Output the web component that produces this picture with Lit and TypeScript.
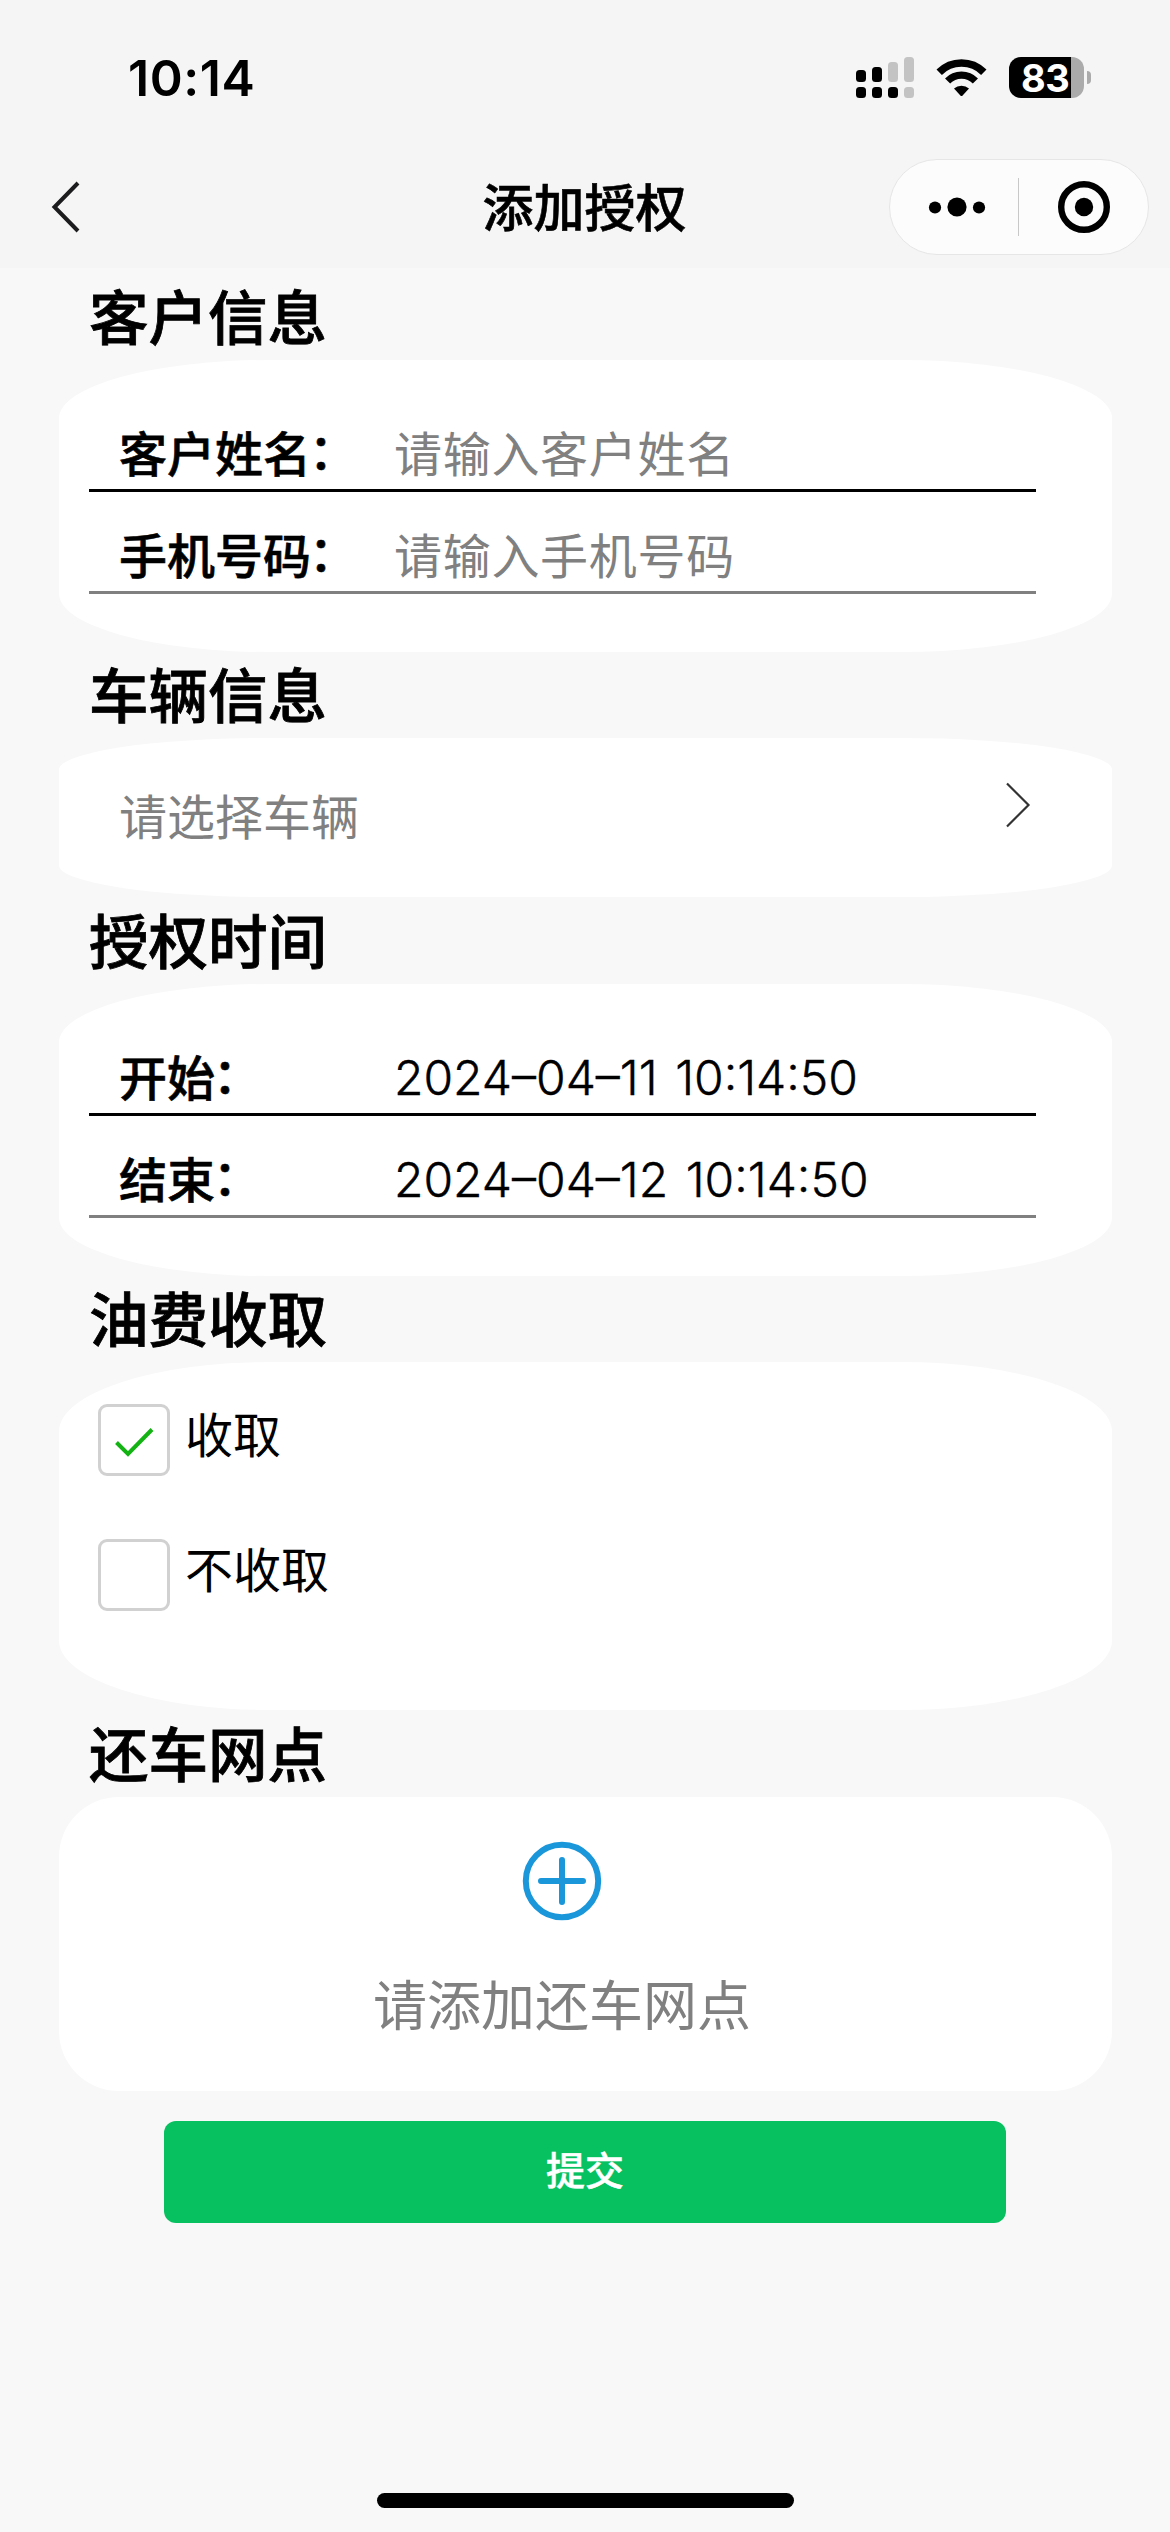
import { LitElement, html, css, svg } from "lit";
import { customElement, property } from "lit/decorators.js";

const SIGNAL_BARS = [
  { x: 0, top: 13, topOn: true, bottomOn: true },
  { x: 16, top: 10, topOn: true, bottomOn: true },
  { x: 32, top: 5, topOn: false, bottomOn: true },
  { x: 48, top: 0, topOn: false, bottomOn: false },
];

@customElement("status-bar")
class StatusBar extends LitElement {
  static styles = css`
    :host {
      display: flex;
      align-items: center;
      height: 155px;
      padding: 0 79px 0 128px;
      box-sizing: border-box;
      font-family: Inter, "Liberation Sans", sans-serif;
      color: #000;
    }
    .time {
      flex: 1;
      font-size: 50px;
      font-weight: 600;
      line-height: 60px;
      letter-spacing: 0.6px;
    }
    .signal {
      width: 58px;
      height: 41px;
    }
    .wifi {
      width: 51px;
      height: 38px;
      margin-left: 22px;
    }
    .battery {
      display: flex;
      align-items: center;
      margin-left: 22px;
      gap: 3px;
    }
    .level {
      width: 75px;
      height: 41px;
      box-sizing: border-box;
      padding-left: 12px;
      border-radius: 12px;
      background: linear-gradient(90deg, #000 62px, #ababab 62px);
      color: #fff;
      font-size: 38px;
      font-weight: 650;
      line-height: 42px;
      letter-spacing: -0.5px;
    }
    .nub {
      width: 4px;
      height: 13px;
      border-radius: 0 5px 5px 0;
      background: #ababab;
    }
  `;

  render() {
    return html`
      <span class="time">10:14</span>
      <svg class="signal" viewBox="0 0 58 41">
        ${SIGNAL_BARS.map(
          (b) => svg`
            <rect x=${b.x} y=${b.top} width="10" height=${25 - b.top} rx="3.5" fill=${b.topOn ? "#000" : "#c3c3c3"}></rect>
            <rect x=${b.x} y="30" width="10" height="11" rx="3.5" fill=${b.bottomOn ? "#000" : "#c3c3c3"}></rect>`
        )}
      </svg>
      <svg class="wifi" viewBox="0 0 51 38">
        <path d="M3.2 13.2 A31.5 31.5 0 0 1 47.8 13.2" fill="none" stroke="#000" stroke-width="7.6"></path>
        <path d="M11.6 22 A19.5 19.5 0 0 1 39.4 22" fill="none" stroke="#000" stroke-width="7.2"></path>
        <path d="M18 29.6 A11 11 0 0 1 33 29.6 L26.6 36.4 Q25.5 37.4 24.4 36.4 Z"></path>
      </svg>
      <div class="battery">
        <div class="level">83</div>
        <div class="nub"></div>
      </div>
    `;
  }
}

@customElement("nav-header")
class NavHeader extends LitElement {
  @property() heading = "";

  static styles = css`
    :host {
      display: grid;
      grid-template-columns: 1fr auto 1fr;
      align-items: center;
      height: 104px;
      padding: 0 21px 0 51px;
      box-sizing: border-box;
      font-family: "Noto Sans CJK SC", sans-serif;
    }
    .back {
      width: 30px;
      height: 52px;
    }
    .title {
      font-size: 51px;
      font-weight: 500;
      line-height: 70px;
      margin: 0 0 4px -31px;
      color: #000;
      -webkit-text-stroke: 0.6px #000;
    }
    .capsule {
      justify-self: end;
      display: flex;
      align-items: center;
      width: 260px;
      height: 96px;
      box-sizing: border-box;
      border: 1px solid #e6e6e6;
      border-radius: 48px;
      background: #fcfcfc;
    }
    .capsule svg {
      width: 258px;
      height: 94px;
    }
  `;

  render() {
    return html`
      <svg class="back" viewBox="0 0 30 52">
        <path d="M27 2 L3.5 26 L27 50" fill="none" stroke="#1c1c1e" stroke-width="4"></path>
      </svg>
      <div class="title">${this.heading}</div>
      <div class="capsule">
        <svg viewBox="0 0 258 94">
          <circle cx="45" cy="47.5" r="6.1"></circle>
          <circle cx="67" cy="47" r="9.6"></circle>
          <circle cx="89" cy="47.5" r="6.1"></circle>
          <rect x="128" y="18" width="1" height="58" fill="#c8c8c8"></rect>
          <circle cx="194" cy="47" r="22.8" fill="none" stroke="#000" stroke-width="6.4"></circle>
          <circle cx="194" cy="47" r="9.2"></circle>
        </svg>
      </div>
    `;
  }
}

@customElement("form-row")
class FormRow extends LitElement {
  @property() label = "";
  @property() value = "";
  @property() placeholder = "";

  static styles = css`
    :host {
      display: flex;
      align-items: center;
      width: 947px;
      height: 102px;
      box-sizing: border-box;
      padding: 23px 0 0 30px;
      border-bottom: 3px solid #808080;
      font-family: "Noto Sans CJK SC", sans-serif;
      font-size: 48px;
      line-height: 68px;
      color: #000;
    }
    :host([strong]) {
      border-bottom-color: #000;
    }
    .label {
      display: flex;
      width: 275px;
      font-weight: 500;
      white-space: nowrap;
      -webkit-text-stroke: 0.6px #000;
    }
    .colon {
      margin: -3px 0 3px -2px;
    }
    .placeholder {
      color: #808080;
      letter-spacing: 0.7px;
    }
    .value {
      font-family: Inter, "Liberation Sans", sans-serif;
      font-weight: 350;
      letter-spacing: 0;
      word-spacing: 4px;
      padding-top: 6px;
      -webkit-text-stroke: 0.4px #000;
    }
  `;

  render() {
    return html`
      <span class="label"><span>${this.label}</span><span class="colon">：</span></span>
      ${this.value
        ? html`<span class="value">${this.value}</span>`
        : html`<span class="placeholder">${this.placeholder}</span>`}
    `;
  }
}

@customElement("check-option")
class CheckOption extends LitElement {
  @property() label = "";
  @property({ type: Boolean }) checked = false;

  static styles = css`
    :host {
      display: flex;
      gap: 15px;
      height: 72px;
      font-family: "Noto Sans CJK SC", sans-serif;
      color: #000;
    }
    .box {
      width: 72px;
      height: 72px;
      box-sizing: border-box;
      border: 3px solid #d1d1d1;
      border-radius: 9px;
      background: #fff;
    }
    .box svg {
      display: block;
      width: 66px;
      height: 66px;
    }
    .text {
      font-size: 48px;
      line-height: 56px;
    }
  `;

  render() {
    return html`
      <div class="box">
        ${this.checked
          ? html`<svg viewBox="0 0 66 66">
              <path d="M15.5 35.5 L27 47 L51 22.5" fill="none" stroke="#12b312" stroke-width="4"></path>
            </svg>`
          : null}
      </div>
      <span class="text">${this.label}</span>
    `;
  }
}

@customElement("app-root")
class AppRoot extends LitElement {
  static styles = css`
    :host {
      display: flex;
      flex-direction: column;
      width: 1170px;
      height: 2532px;
      overflow: hidden;
      background: #f8f8f8;
      font-family: "Noto Sans CJK SC", sans-serif;
      color: #000;
    }
    .top {
      height: 268px;
      flex: none;
      background: #f5f5f5;
    }
    .content {
      flex: 1;
      display: flex;
      flex-direction: column;
      padding-top: 6px;
    }
    h2 {
      height: 86px;
      margin: 0;
      padding-left: 89px;
      font-size: 59.5px;
      font-weight: 500;
      line-height: 81px;
      -webkit-text-stroke: 0.8px #000;
    }
    .card {
      width: 1053px;
      margin-left: 59px;
      box-sizing: border-box;
      padding-left: 30px;
      background: #fff;
      border-radius: 20%;
    }
    .rows {
      height: 292px;
      padding-top: 30px;
    }
    .vehicle {
      display: flex;
      justify-content: space-between;
      height: 159px;
      margin-bottom: 1px;
      padding: 42px 81px 0 60px;
      color: #808080;
      font-size: 48px;
      line-height: 68px;
    }
    .vehicle svg {
      width: 26px;
      height: 48px;
      margin-top: 1px;
    }
    .fuel {
      display: flex;
      flex-direction: column;
      gap: 63px;
      height: 348px;
      margin-bottom: 1px;
      padding: 42px 0 0 39px;
    }
    .station {
      display: flex;
      flex-direction: column;
      align-items: center;
      height: 294px;
      padding: 44px 47px 0 0;
      border-radius: 60px;
      color: #808080;
      font-size: 54px;
    }
    .station svg {
      width: 80px;
      height: 80px;
    }
    .station span {
      margin-top: 43px;
      line-height: 78px;
    }
    .submit {
      width: 842px;
      height: 102px;
      margin: 30px 0 0 164px;
      padding: 0 0 7px;
      border: 0;
      border-radius: 12px;
      background: #07c160;
      color: #fff;
      font-family: inherit;
      font-size: 39px;
      font-weight: 500;
      line-height: 95px;
      -webkit-text-stroke: 0.5px #fff;
    }
    .home {
      width: 417px;
      height: 15px;
      margin: auto auto 24px 377px;
      border-radius: 8px;
      background: #000;
    }
  `;

  render() {
    return html`
      <div class="top">
        <status-bar></status-bar>
        <nav-header heading="添加授权"></nav-header>
      </div>
      <div class="content">
        <h2>客户信息</h2>
        <div class="card rows">
          <form-row strong label="客户姓名" placeholder="请输入客户姓名"></form-row>
          <form-row label="手机号码" placeholder="请输入手机号码"></form-row>
        </div>
        <h2>车辆信息</h2>
        <div class="card vehicle">
          <span>请选择车辆</span>
          <svg viewBox="0 0 26 48">
            <path d="M2 2.5 L23.5 24 L2 45.5" fill="none" stroke="#333" stroke-width="2.2"></path>
          </svg>
        </div>
        <h2>授权时间</h2>
        <div class="card rows">
          <form-row strong label="开始" value="2024–04–11 10:14:50"></form-row>
          <form-row label="结束" value="2024–04–12 10:14:50"></form-row>
        </div>
        <h2>油费收取</h2>
        <div class="card fuel">
          <check-option checked label="收取"></check-option>
          <check-option label="不收取"></check-option>
        </div>
        <h2>还车网点</h2>
        <div class="card station">
          <svg viewBox="0 0 80 80" fill="none" stroke="#1a96db" stroke-width="6">
            <circle cx="40" cy="40" r="36.2"></circle>
            <path d="M19 40 H61 M40 19 V61" stroke-linecap="round"></path>
          </svg>
          <span>请添加还车网点</span>
        </div>
        <button class="submit">提交</button>
        <div class="home"></div>
      </div>
    `;
  }
}
